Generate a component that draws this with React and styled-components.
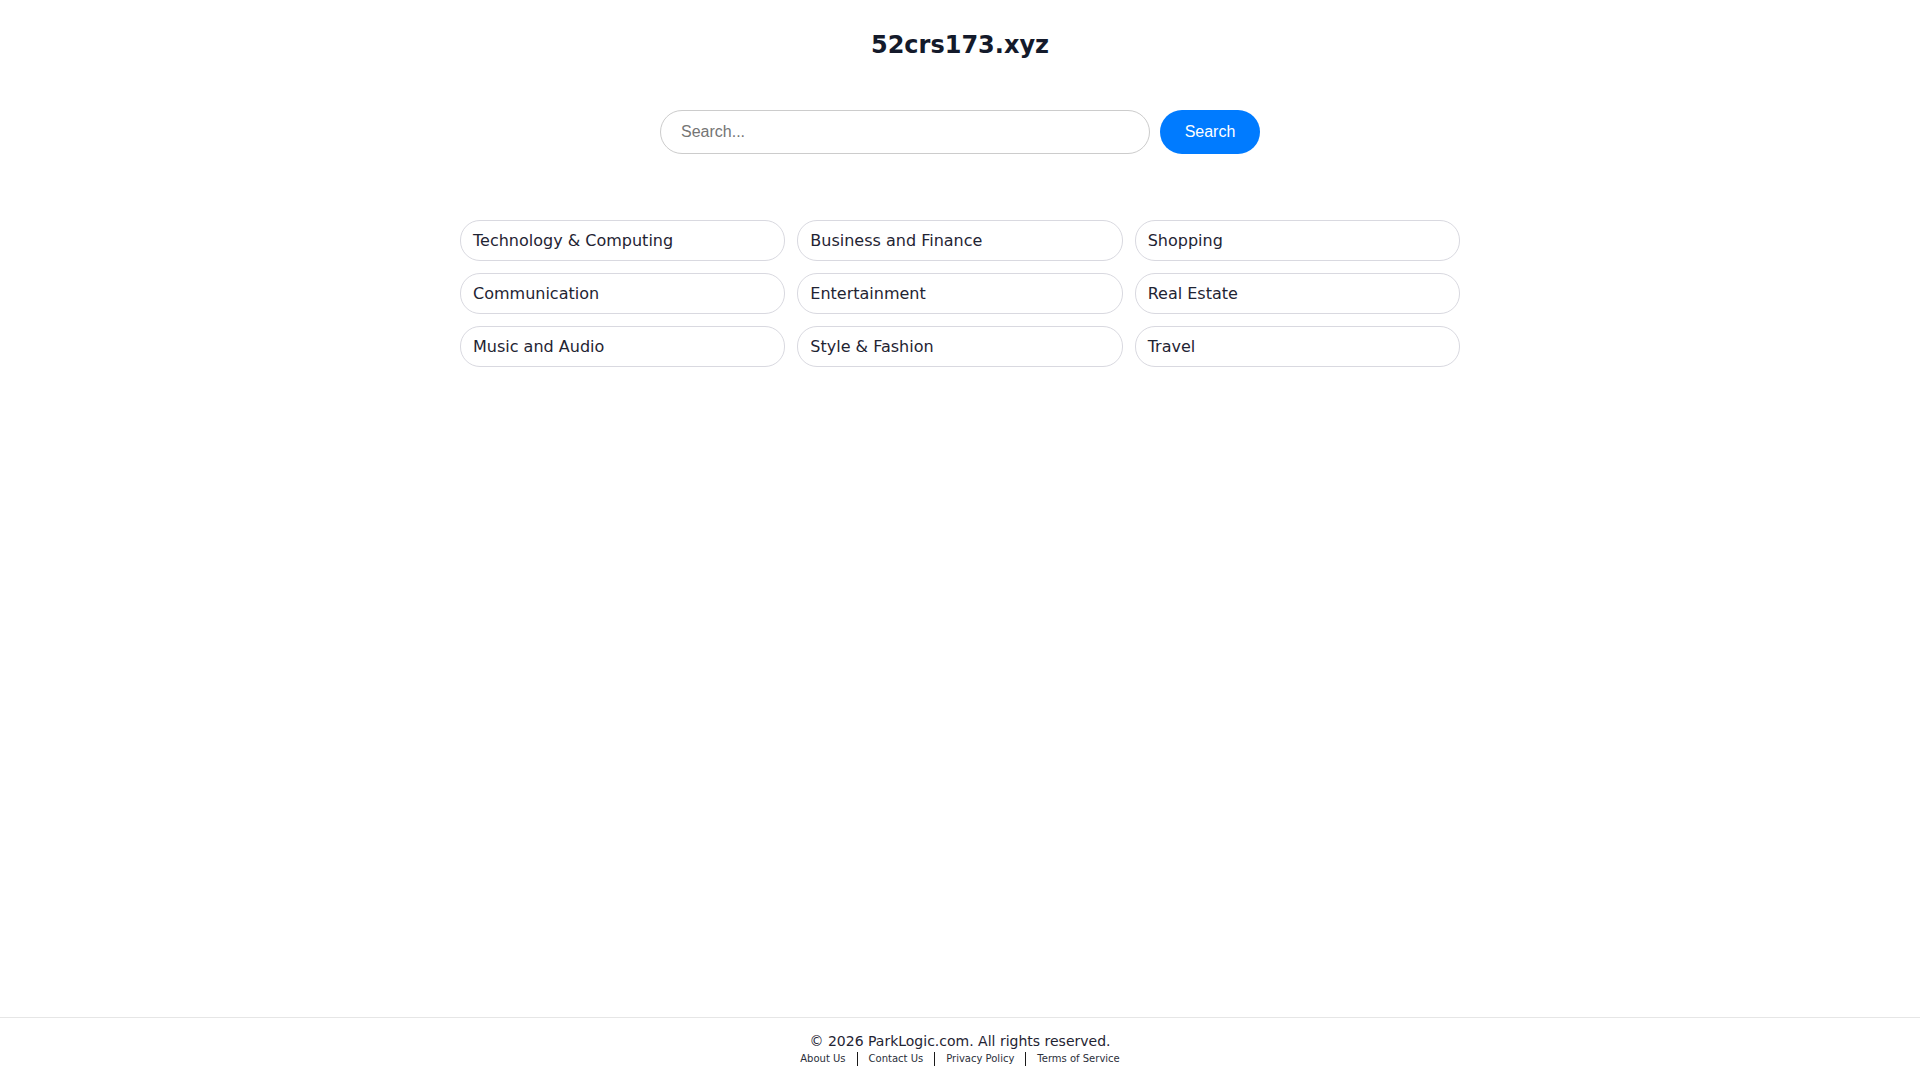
import React from "react";
import styled, { createGlobalStyle } from "styled-components";

const GlobalStyle = createGlobalStyle`
  * { box-sizing: border-box; }
  html, body { margin: 0; padding: 0; background: #ffffff; }
  body {
    font-family: "DejaVu Sans", Verdana, sans-serif;
    color: #1f2433;
  }
`;

const Page = styled.div`
  min-height: 100vh;
  display: flex;
  flex-direction: column;
`;

const Main = styled.main`
  flex: 1;
  display: flex;
  flex-direction: column;
  align-items: center;
  padding-top: 31px;
`;

const Title = styled.h1`
  margin: 0;
  font-size: 24px;
  font-weight: 700;
  line-height: 28px;
  color: #141a2b;
`;

const SearchForm = styled.form`
  margin-top: 51px;
  width: 600px;
  display: flex;
  gap: 10px;
`;

const SearchInput = styled.input`
  flex: 1;
  height: 44px;
  padding: 0 20px;
  border: 1px solid #cccccc;
  border-radius: 22px;
  font-family: "Liberation Sans", Arial, sans-serif;
  font-size: 16px;
  color: #333;
  outline: none;
  &::placeholder { color: #757575; }
`;

const SearchButton = styled.button`
  width: 100px;
  height: 44px;
  border: none;
  border-radius: 22px;
  background: #007bff;
  color: #ffffff;
  font-family: "Liberation Sans", Arial, sans-serif;
  font-size: 16px;
  cursor: pointer;
`;

const CategoryGrid = styled.div`
  margin-top: 66px;
  width: 1000px;
  display: grid;
  grid-template-columns: repeat(3, 1fr);
  gap: 12px;
`;

const CategoryLink = styled.a`
  display: block;
  padding: 10px 12px;
  line-height: 19px;
  font-size: 16px;
  color: #1f2433;
  text-decoration: none;
  border: 1px solid #d9d9e0;
  border-radius: 20px;
  background: #fff;
`;

const Footer = styled.footer`
  border-top: 1px solid #e6e6e6;
  padding: 15px 0 14px;
  display: flex;
  flex-direction: column;
  align-items: center;
`;

const Copyright = styled.div`
  font-size: 14px;
  line-height: 17px;
  color: #1f2433;
`;

const FooterLinks = styled.nav`
  display: flex;
  align-items: center;
  height: 15px;
  margin-top: 1px;
`;

const FooterLink = styled.a`
  font-size: 10px;
  color: #2b2f3a;
  text-decoration: none;
`;

const Divider = styled.span`
  display: inline-block;
  width: 1px;
  height: 14px;
  background: #1a1a1a;
  margin: 0 11px;
`;

const categories = [
  "Technology & Computing",
  "Business and Finance",
  "Shopping",
  "Communication",
  "Entertainment",
  "Real Estate",
  "Music and Audio",
  "Style & Fashion",
  "Travel",
];

const links = ["About Us", "Contact Us", "Privacy Policy", "Terms of Service"];

export default function App() {
  return (
    <Page>
      <GlobalStyle />
      <Main>
        <Title>52crs173.xyz</Title>
        <SearchForm onSubmit={(e) => e.preventDefault()}>
          <SearchInput type="text" placeholder="Search..." />
          <SearchButton type="submit">Search</SearchButton>
        </SearchForm>
        <CategoryGrid>
          {categories.map((c) => (
            <CategoryLink key={c} href="#">
              {c}
            </CategoryLink>
          ))}
        </CategoryGrid>
      </Main>
      <Footer>
        <Copyright>© 2026 ParkLogic.com. All rights reserved.</Copyright>
        <FooterLinks>
          {links.map((l, i) => (
            <React.Fragment key={l}>
              {i > 0 && <Divider />}
              <FooterLink href="#">{l}</FooterLink>
            </React.Fragment>
          ))}
        </FooterLinks>
      </Footer>
    </Page>
  );
}
